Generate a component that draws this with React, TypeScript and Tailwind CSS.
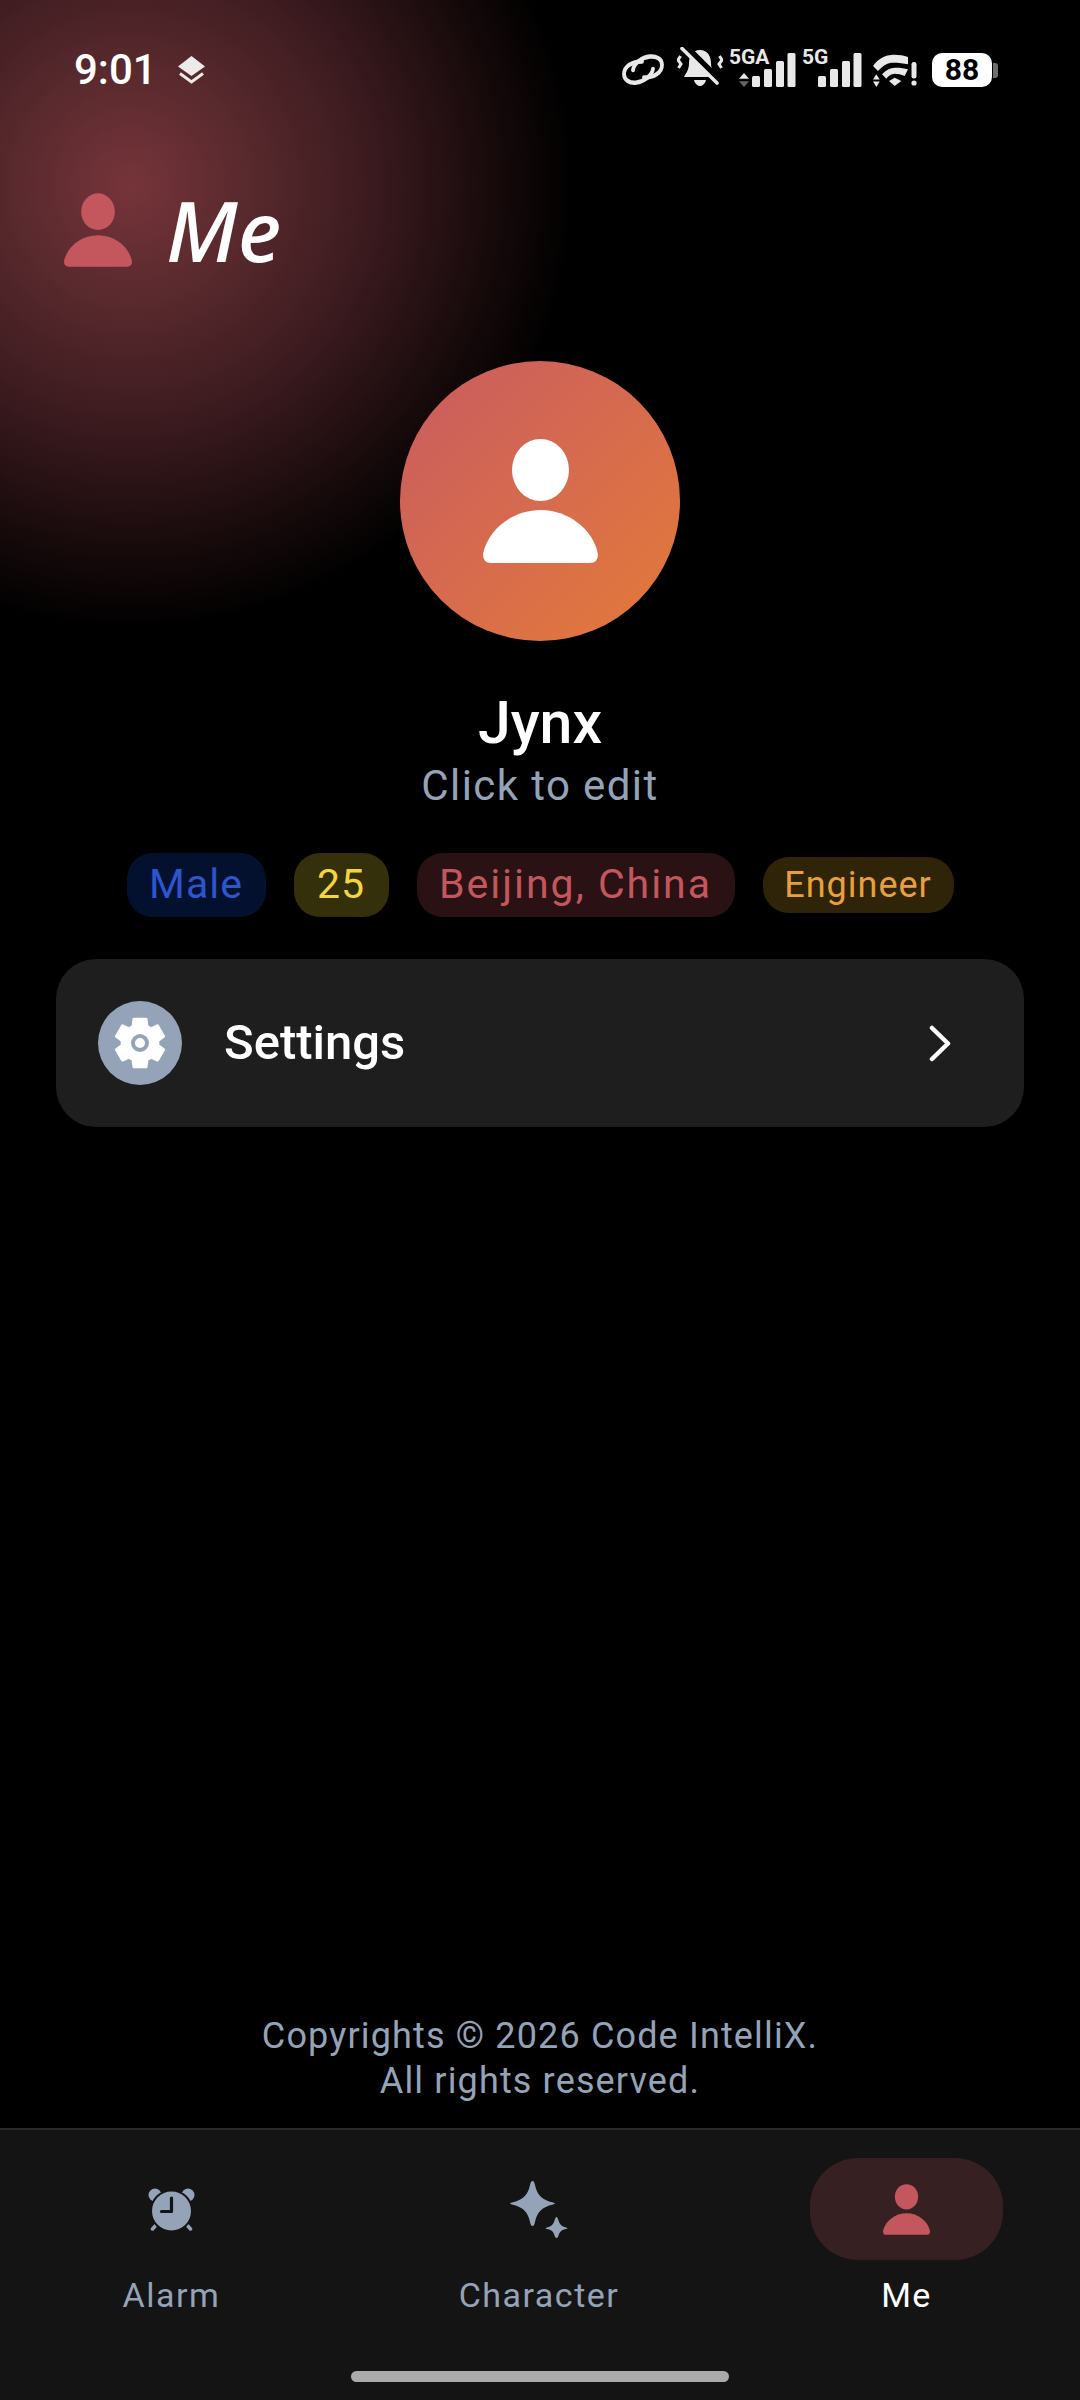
const gearPath = (() => {
  const pts: string[] = [];
  const R = 24.5, r = 18;
  for (let i = 0; i < 6; i++) {
    const a = (i * 60 - 90) * Math.PI / 180;
    const d = 0.25, e = 0.14;
    const list: [number, number][] = [[R, a - d], [R, a + d], [r, a + d + e], [r, a + Math.PI / 3 - d - e]];
    for (const [rad, t] of list) pts.push(`${(26 + rad * Math.cos(t)).toFixed(2)} ${(26 + rad * Math.sin(t)).toFixed(2)}`);
  }
  return "M" + pts.join("L") + "Z";
})();

function Person({ className, fill }: { className: string; fill: string }) {
  return (
    <svg viewBox="0 0 115 124" className={className} fill={fill}>
      <ellipse cx="57.5" cy="31" rx="28.5" ry="31" />
      <path d="M8 124Q0 124 0 115C5 90 30 71 57.5 71C85 71 110 90 115 115Q115 124 107 124Z" />
    </svg>
  );
}

function Bars({ className }: { className: string }) {
  return (
    <svg viewBox="0 0 44 34" className={className} fill="#e8e8e8">
      <rect x="0" y="23" width="8" height="11" rx="1.5" />
      <rect x="12" y="16" width="8" height="18" rx="1.5" />
      <rect x="24" y="8" width="8" height="26" rx="1.5" />
      <rect x="35.5" y="0" width="8" height="34" rx="1.5" />
    </svg>
  );
}

function Arrows({ className, dim }: { className: string; dim?: boolean }) {
  return (
    <svg viewBox="0 0 10 14" className={className}>
      <path d="M5 0L10 5.8H0Z" fill="#e8e8e8" />
      <path d="M5 14L10 8.2H0Z" fill={dim ? "#666" : "#e8e8e8"} />
    </svg>
  );
}

function StatusBar() {
  return (
    <div className="flex h-[100px] shrink-0 items-end justify-between pb-[13px] pl-[74px] pr-[82px]">
      <div className="mb-[-7px] flex items-center gap-[21px]">
        <span className="text-[42px] leading-[48px] font-medium text-white font-['Roboto',sans-serif]">9:01</span>
        <svg viewBox="0 0 27 29" className="h-[29px] w-[27px]" fill="#eeeaea">
          <path d="M13.5 0L27 10.5L13.5 20L0 10.5Z" />
          <path d="M2 17.5L13.5 26L25 17.5" fill="none" stroke="#eeeaea" strokeWidth="3" />
        </svg>
      </div>
      <div className="flex h-[40px] items-end">
        <svg viewBox="0 0 42 27" preserveAspectRatio="none" className="mb-[2px] h-[31px] w-[42px]" fill="none" stroke="#e8e8e8" strokeWidth="3.8" strokeLinecap="round">
          <path d="M20 6.500C10 6.500 2 11 2 17.500C2 23 8 25.500 14 25C22 24 30 19 31 13" />
          <path d="M22 20.500C32 20.500 40 16 40 9.500C40 4 34 1.800 28 2.200C20 3 12 8 11 14" />
        </svg>
        <svg viewBox="0 0 46 40" className="ml-[13px] h-[40px] w-[46px]" fill="#e8e8e8">
          <path d="M23 3C15 3 12 10 12 16C12 23 9 26 7 30H39C37 26 34 23 34 16C34 10 31 3 23 3Z" />
          <path d="M17 33H29C28 37 25 39 23 39C21 39 18 37 17 33Z" />
          <path d="M8 0L44 36" stroke="#000" strokeWidth="8" />
          <path d="M5 1.500L40 36" stroke="#e8e8e8" strokeWidth="3.600" strokeLinecap="round" />
          <path d="M3.500 9L1 13L4 17L1.500 21" fill="none" stroke="#e8e8e8" strokeWidth="3" />
          <path d="M42.500 9L45 13L42 17L44.500 21" fill="none" stroke="#e8e8e8" strokeWidth="3" />
        </svg>
        <div className="relative ml-[6px] flex h-[38px] w-[67px] items-end">
          <span className="absolute left-0 top-0 text-[21px] leading-[16px] font-bold text-[#e8e8e8]">5GA</span>
          <Arrows className="ml-[10px] h-[14px] w-[10px]" dim />
          <Bars className="ml-[3px] h-[34px] w-[44px]" />
        </div>
        <div className="relative ml-[6px] flex h-[38px] w-[60px] items-end justify-end">
          <span className="absolute left-0 top-0 text-[21px] leading-[16px] font-bold text-[#e8e8e8]">5G</span>
          <Bars className="h-[34px] w-[44px]" />
        </div>
        <svg viewBox="0 0 44 33" className="ml-[11px] h-[33px] w-[44px]" fill="#e8e8e8">
          <path d="M0 12C5 5 12 1 18.300 1C24 0.500 30 1.500 35 3V10.300C30 9 24 8.500 18 8.700C13 9.500 9 12.500 5 17Z" />
          <path d="M9 20.300C13 16 17 13.700 21.700 13.700C26 13.500 31 14 35 15.300L31.700 22C28 20.500 25 19.700 21.700 19.700C18 20 15.500 22 13.300 24.700Z" />
          <path d="M16 27L21.700 23.700L28.300 27L21.700 32Z" />
          <path d="M3.300 20.300L6.700 25.500H0Z" />
          <path d="M3.300 33L6.700 27.500H0Z" />
          <rect x="38.500" y="8" width="5" height="16.500" rx="2.200" />
          <circle cx="41" cy="29" r="2.600" />
        </svg>
        <div className="ml-[15px] flex h-[34px] items-center">
          <div className="flex h-[34px] w-[60px] items-center justify-center rounded-[10px] bg-white text-[30px] leading-none font-bold text-black">88</div>
          <div className="ml-px h-[15px] w-[5px] rounded-r-[3px] bg-[#6e6e6e]" />
        </div>
      </div>
    </div>
  );
}

function Chip({ text, cls }: { text: string; cls: string }) {
  return <span className={`flex items-center justify-center ${cls}`}>{text}</span>;
}

function Gear() {
  return (
    <svg viewBox="0 0 52 52" className="h-[52px] w-[52px]">
      <path d={gearPath} fill="#fff" stroke="#fff" strokeWidth="3" strokeLinejoin="round" />
      <circle cx="26" cy="26" r="7" fill="#fff" stroke="#94a3b8" strokeWidth="4" />
    </svg>
  );
}

function Alarm() {
  return (
    <svg viewBox="0 0 47 43" className="h-[43px] w-[47px]">
      <circle cx="7" cy="7" r="6.500" fill="#94a3b8" />
      <circle cx="40" cy="7" r="6.500" fill="#94a3b8" />
      <path d="M9 36L4.500 41M38 36L42.500 41" stroke="#94a3b8" strokeWidth="3.500" strokeLinecap="round" />
      <circle cx="23.500" cy="23" r="21.500" fill="#141414" />
      <circle cx="23.500" cy="23" r="19.500" fill="#94a3b8" />
      <path d="M23.500 10V23.500H13.500" fill="none" stroke="#141414" strokeWidth="3.200" strokeLinecap="round" strokeLinejoin="round" />
    </svg>
  );
}

function Sparkle() {
  return (
    <svg viewBox="0 0 58 57" className="h-[57px] w-[58px]" fill="#94a3b8">
      <path d="M22.500 0C24 0 24.500 2 25 4C27 14 32 19 43 21.500C45.500 22 45.500 23 43 23.500C32 26 27 31 25 41C24.500 43 24 45 22.500 45C21 45 20.500 43 20 41C18 31 13 26 2 23.500C-0.500 23 -0.500 22 2 21.500C13 19 18 14 20 4C20.500 2 21 0 22.500 0Z" />
      <path d="M46.500 36C47.500 36 48 38 49 41C50 44 53 46 56 46.500C58 47 58 47.500 56 48C53 48.500 50 50 49 53C48 56 47.500 57 46.500 57C45.500 57 45 56 44 53C43 50 40 48.500 37 48C35 47.500 35 47 37 46.500C40 46 43 44 44 41C45 38 45.500 36 46.500 36Z" />
    </svg>
  );
}

function NavItem({ label, active, children }: { label: string; active?: boolean; children: React.ReactNode }) {
  return (
    <div className="flex w-[193px] flex-col items-center">
      <div className={`flex h-[102px] w-[193px] items-center justify-center rounded-[48px] ${active ? "bg-[#372022]" : ""}`}>{children}</div>
      <span className={`mt-[13px] text-[34px] leading-[44px] tracking-[1.5px] ${active ? "text-white" : "text-[#94a3b8]"}`}>{label}</span>
    </div>
  );
}

export default function App() {
  return (
    <div className="flex h-[2400px] w-[1080px] flex-col overflow-hidden bg-black bg-[radial-gradient(circle_445px_at_130px_185px,#76343a_0%,#5a2a2e_25%,#3a1a1e_55%,#170a0b_82%,#000000_100%)] bg-no-repeat font-['Roboto','Noto_Sans',sans-serif]">
      <StatusBar />
      <div className="flex items-center pl-[64px] pt-[84px]">
        <Person className="h-[74px] w-[68px]" fill="#c4565d" />
        <span className="ml-[34px] text-[84px] leading-[92px] font-medium text-white italic font-['Noto_Sans',sans-serif]">Me</span>
      </div>
      <div className="mx-auto mt-[85px] flex h-[280px] w-[280px] items-center justify-center rounded-full bg-gradient-to-br from-[#c95b5f] to-[#e47a34]">
        <Person className="h-[124px] w-[115px]" fill="#ffffff" />
      </div>
      <div className="mt-[46px] text-center text-[59px] leading-[72px] font-medium text-white">Jynx</div>
      <div className="mt-[2px] text-center text-[42px] leading-[50px] tracking-[1.4px] text-[#94a3b8]">Click to edit</div>
      <div className="mt-[42px] flex items-center justify-center gap-[28px] text-[41px] tracking-[2px]">
        <Chip text="Male" cls="h-[64px] w-[139px] rounded-[26px] bg-[#04112e] tracking-[1px] text-[#2c55cf]" />
        <Chip text="25" cls="h-[64px] w-[95px] rounded-[26px] bg-[#34300b] tracking-[1px] text-[#f3d53f]" />
        <Chip text="Beijing, China" cls="h-[64px] w-[318px] rounded-[26px] bg-[#2a1214] text-[#c4565d]" />
        <Chip text="Engineer" cls="h-[56px] w-[191px] rounded-[26px] bg-[#302408] text-[36px] tracking-[1px] text-[#e89f3c]" />
      </div>
      <div className="mx-[56px] mt-[42px] flex h-[168px] items-center rounded-[40px] bg-[#1e1e1e] pl-[42px] pr-[73px]">
        <div className="flex h-[84px] w-[84px] items-center justify-center rounded-full bg-[#94a3b8]">
          <Gear />
        </div>
        <span className="ml-[42px] flex-1 text-[49px] leading-[60px] font-medium text-white">Settings</span>
        <svg viewBox="0 0 22 37" className="h-[37px] w-[22px]" fill="none" stroke="#fff" strokeWidth="4.500" strokeLinecap="round" strokeLinejoin="round">
          <path d="M3 3L19 18.500L3 34" />
        </svg>
      </div>
      <div className="mt-auto pb-[24px] text-center text-[36px] leading-[45px] tracking-[1.15px] text-[#94a3b8]">
        <div>Copyrights © 2026 Code IntelliX.</div>
        <div>All rights reserved.</div>
      </div>
      <div className="flex h-[272px] shrink-0 flex-col border-t-2 border-[#2a2a2a] bg-[#141414] pt-[28px]">
        <div className="flex justify-between pl-[75px] pr-[77px]">
          <NavItem label="Alarm"><Alarm /></NavItem>
          <NavItem label="Character"><Sparkle /></NavItem>
          <NavItem label="Me" active><Person className="h-[51px] w-[47px]" fill="#c4565d" /></NavItem>
        </div>
        <div className="mx-auto mt-[54px] h-[11px] w-[378px] rounded-full bg-[#aaaaaa]" />
      </div>
    </div>
  );
}
